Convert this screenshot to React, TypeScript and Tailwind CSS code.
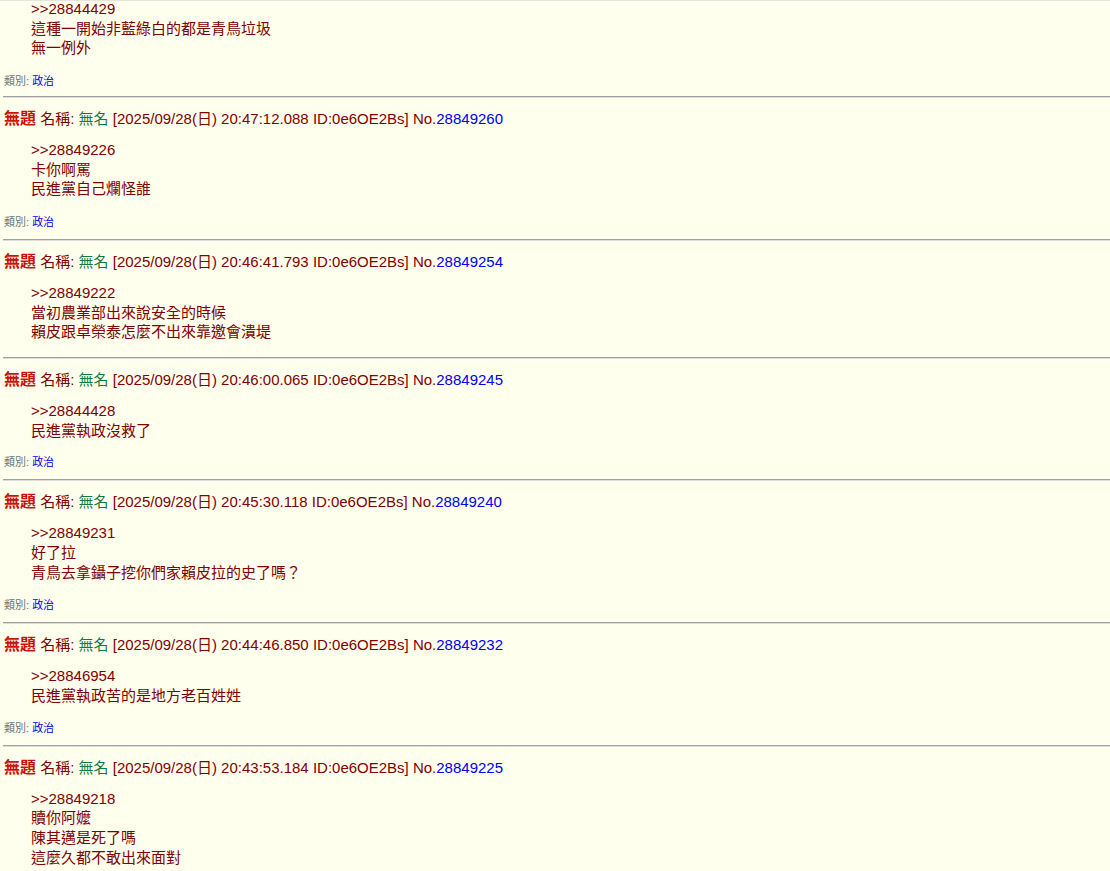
import React from 'react';

interface Post {
  no: string;
  time: string;
  lines: string[];
  category?: string;
}

const posts: Post[] = [
  { no: '28849260', time: '2025/09/28(日) 20:47:12.088', lines: ['>>28849226', '卡你啊罵', '民進黨自己爛怪誰'], category: '政治' },
  { no: '28849254', time: '2025/09/28(日) 20:46:41.793', lines: ['>>28849222', '當初農業部出來說安全的時候', '賴皮跟卓榮泰怎麼不出來靠邀會潰堤'] },
  { no: '28849245', time: '2025/09/28(日) 20:46:00.065', lines: ['>>28844428', '民進黨執政沒救了'], category: '政治' },
  { no: '28849240', time: '2025/09/28(日) 20:45:30.118', lines: ['>>28849231', '好了拉', '青鳥去拿鑷子挖你們家賴皮拉的史了嗎？'], category: '政治' },
  { no: '28849232', time: '2025/09/28(日) 20:44:46.850', lines: ['>>28846954', '民進黨執政苦的是地方老百姓姓'], category: '政治' },
  { no: '28849225', time: '2025/09/28(日) 20:43:53.184', lines: ['>>28849218', '贖你阿嬤', '陳其邁是死了嗎', '這麼久都不敢出來面對'] },
];

const Divider = () => <div className="ml-[3px] h-[2px] border-t border-b border-t-[#a0a0a0] border-b-[#dcdcdc]" />;

const Body: React.FC<{ lines: string[] }> = ({ lines }) => (
  <div className="pl-[31px] text-[15px] leading-[19.67px] text-[#800000]">
    {lines.map((l, i) => (
      <div key={i}>{l}</div>
    ))}
  </div>
);

const Category: React.FC<{ name: string; short?: boolean }> = ({ name, short }) => (
  <div className={`${short ? 'mt-[15px]' : 'mt-[16px]'} pl-[4px] text-[11px] leading-[14px] text-[#707070]`}>
    類別: <span className="text-[#0000ee]">{name}</span>
  </div>
);

const PostItem: React.FC<{ post: Post }> = ({ post }) => (
  <div className={`pt-[11px] ${post.category ? 'pb-[10px]' : 'pb-[15px]'}`}>
    <div className="pl-[4px] h-[20px] leading-[20px] text-[15px] text-[#800000] whitespace-nowrap">
      <span className="text-[16px] font-bold text-[#cc1105]">無題</span>{' '}
      名稱: <span className="text-[#117743]">無名</span> [{post.time} ID:0e6OE2Bs] No.
      <span className="text-[#0000ee]">{post.no}</span>
    </div>
    <div className="mt-[11px]">
      <Body lines={post.lines} />
    </div>
    {post.category && <Category name={post.category} short={post.lines.length < 3} />}
  </div>
);

export default function App() {
  return (
    <div
      className="min-h-screen bg-[#ffffee] overflow-hidden"
      style={{ fontFamily: '"Liberation Sans", Arial, "Noto Sans CJK TC", sans-serif' }}
    >
      <div className="h-px bg-[#e6e6e0]" />
      <div className="-mt-[2px] pb-[8px]">
        <Body lines={['>>28844429', '這種一開始非藍綠白的都是青鳥垃圾', '無一例外']} />
        <Category name="政治" />
      </div>
      {posts.map((p) => (
        <React.Fragment key={p.no}>
          <Divider />
          <PostItem post={p} />
        </React.Fragment>
      ))}
    </div>
  );
}
